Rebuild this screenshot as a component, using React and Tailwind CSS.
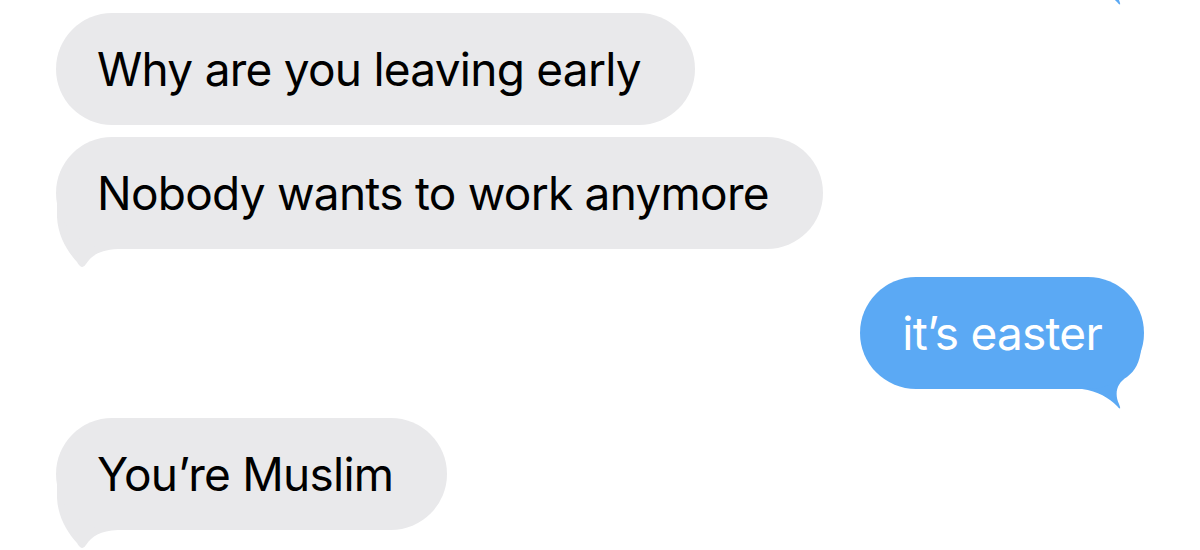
import React from 'react';

const GRAY = '#e9e9eb';
const BLUE = '#5ba9f4';

const GrayTail = () => (
  <svg className="absolute left-0 bottom-[-22px] w-[70px] h-[72px]" viewBox="0 -50 70 72">
    <path d="M1,-50 L1,-32 C2,-12 12,3 21,13 Q26,22 30,15 C36,6 44,1 62,0 L62,-50 Z" fill={GRAY} />
  </svg>
);

const BlueTail = () => (
  <svg className="absolute right-0 bottom-[-22px] w-[70px] h-[62px]" viewBox="-70 -40 70 62">
    <path d="M-62,0 C-46,2 -35,9 -27,17 Q-22,23 -25,15 C-30,4 -27,-6 -17,-12 C-9,-18 -4,-27 -3,-40 L-62,-40 Z" fill={BLUE} />
  </svg>
);

const Received = ({ text, tail, className = '' }) => (
  <div className={`relative self-start ${className}`}>
    {tail && <GrayTail />}
    <div className="relative h-[112px] flex items-center pl-[41px] pr-[54px] rounded-[56px] bg-[#e9e9eb] text-black text-[46px] tracking-[-0.75px] whitespace-nowrap">
      {text}
    </div>
  </div>
);

const Sent = ({ text, className = '' }) => (
  <div className={`relative self-end ${className}`}>
    <BlueTail />
    <div className="relative h-[112px] min-w-[240px] flex items-center px-[42px] rounded-[56px] bg-[#5ba9f4] text-white text-[46px] tracking-[-0.75px] whitespace-nowrap">
      {text}
    </div>
  </div>
);

export default function App() {
  return (
    <div
      className="w-[1200px] h-[550px] overflow-hidden bg-white flex flex-col pl-[56px] pr-[56px]"
      style={{ fontFamily: 'Inter, "Noto Sans", sans-serif' }}
    >
      <Sent text="" className="mt-[-127px]" />
      <Received text="Why are you leaving early" className="mt-[28px]" />
      <Received text="Nobody wants to work anymore" tail className="mt-[12px]" />
      <Sent text="it’s easter" className="mt-[28px]" />
      <Received text="You’re Muslim" tail className="mt-[29px]" />
    </div>
  );
}
